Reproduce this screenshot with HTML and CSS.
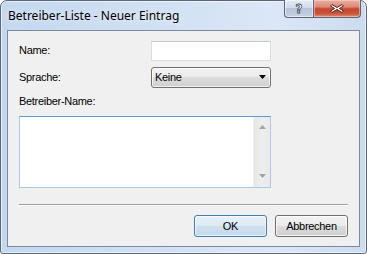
FILE: index.html
```html
<!DOCTYPE html>
<html lang="de">
<head>
<meta charset="utf-8">
<title>Betreiber-Liste - Neuer Eintrag</title>
<link rel="stylesheet" href="styles.css">
</head>
<body>
<div class="window">
  <div class="titlebar">
    <span class="title">Betreiber-Liste - Neuer Eintrag</span>
    <div class="caption-btns">
      <div class="cap-help"><span>?</span></div>
      <div class="cap-close">
        <svg width="16" height="11" viewBox="0 0 16 11">
          <path d="M3 1.5 L8 4.5 L13 1.5 L14.5 3 L10.5 5.5 L14.5 8 L13 9.5 L8 6.5 L3 9.5 L1.5 8 L5.5 5.5 L1.5 3 Z" fill="#fff" stroke="#5a1a10" stroke-width="1" stroke-linejoin="round"/>
        </svg>
      </div>
    </div>
  </div>
  <div class="client">
    <div class="row row-name">
      <label class="lbl">Name:</label>
      <input class="textbox" type="text">
    </div>
    <div class="row row-lang">
      <label class="lbl">Sprache:</label>
      <div class="combo">
        <span>Keine</span>
        <svg class="combo-arrow" width="7" height="4" viewBox="0 0 7 4"><path d="M0 0 H7 L3.5 4 Z" fill="#000"/></svg>
      </div>
    </div>
    <label class="lbl lbl-block">Betreiber-Name:</label>
    <div class="memo">
      <div class="memo-area"></div>
      <div class="vscroll">
        <svg width="7" height="4" viewBox="0 0 7 4"><path d="M0 4 H7 L3.5 0 Z" fill="#a3a3a3"/></svg>
        <svg width="7" height="4" viewBox="0 0 7 4"><path d="M0 0 H7 L3.5 4 Z" fill="#a3a3a3"/></svg>
      </div>
    </div>
    <div class="separator"></div>
    <div class="buttons">
      <button class="btn btn-default">OK</button>
      <button class="btn">Abbrechen</button>
    </div>
  </div>
</div>
</body>
</html>
```

FILE: styles.css
```css
html, body {
  margin: 0;
  padding: 0;
  background: #fff;
}

.window {
  box-sizing: border-box;
  width: 367px;
  height: 254px;
  border: 1px solid #5b6778;
  border-radius: 7px 7px 3px 3px;
  background: linear-gradient(90deg, #c3d8ee 0%, #cfe0f3 40%, #dbe7f6 75%, #cbdcef 100%);
  box-shadow: inset 0 0 0 1px rgba(255,255,255,0.6);
  padding: 0 6px 6px 6px;
  display: flex;
  flex-direction: column;
}

.titlebar {
  height: 29px;
  display: flex;
  align-items: flex-start;
  justify-content: space-between;
}

.title {
  font-family: "Noto Sans", "Open Sans", sans-serif;
  font-size: 12px;
  line-height: 16px;
  color: #000;
  margin: 7px 0 0 1px;
  text-shadow: 0 0 6px rgba(255,255,255,0.9);
}

.caption-btns {
  display: flex;
  margin-right: -1px;
  margin-top: -1px;
}

.cap-help, .cap-close {
  height: 18px;
  box-sizing: border-box;
  border: 1px solid #5a6678;
  border-top: none;
  display: flex;
  align-items: center;
  justify-content: center;
}

.cap-help {
  width: 29px;
  border-radius: 0 0 0 4px;
  border-right: none;
  background: linear-gradient(180deg, #e3ebf5 0%, #d2dcea 45%, #b5c4d7 50%, #c4d2e3 100%);
  box-shadow: inset 0 0 0 1px rgba(255,255,255,0.55);
}

.cap-help span {
  font-family: "DejaVu Sans", sans-serif;
  font-weight: bold;
  font-size: 12px;
  line-height: 12px;
  color: #fff;
  -webkit-text-stroke: 0.8px #3d4a5c;
}

.cap-close {
  width: 48px;
  border-radius: 0 0 4px 0;
  background: linear-gradient(180deg, #eab0a3 0%, #dc8a78 40%, #c8452d 52%, #c9553c 80%, #de8f78 100%);
  box-shadow: inset 0 0 0 1px rgba(255,220,210,0.5);
}

.client {
  box-sizing: border-box;
  height: 218px;
  border: 1px solid #7d8a9b;
  background: #f0f0f0;
  padding: 10px 11px 0 11px;
  display: flex;
  flex-direction: column;
  font-family: "Liberation Sans", Arial, sans-serif;
  font-size: 11px;
  letter-spacing: -0.3px;
  color: #000;
}

.row {
  display: flex;
  align-items: center;
  justify-content: space-between;
  width: 252px;
}

.row-lang {
  margin-top: 6px;
}

.lbl {
  line-height: 13px;
}

.lbl-block {
  display: block;
  margin-top: 7px;
}

.textbox {
  box-sizing: border-box;
  width: 120px;
  height: 20px;
  margin: 0;
  border: 1px solid #d8dde5;
  border-top-color: #c3c9d2;
  background: #fff;
  outline: none;
  padding: 0 3px;
  font: inherit;
}

.combo {
  box-sizing: border-box;
  width: 120px;
  height: 21px;
  border: 1px solid #707070;
  border-radius: 3px;
  background: linear-gradient(180deg, #f2f2f2 0%, #ebebeb 49%, #dddddd 50%, #cfcfcf 100%);
  box-shadow: inset 0 0 0 1px rgba(255,255,255,0.7);
  display: flex;
  align-items: center;
  justify-content: space-between;
  padding: 0 4px 0 3px;
  color: #000;
}

.combo span {
  line-height: 13px;
}

.combo-arrow {
  display: block;
}

.memo {
  box-sizing: border-box;
  width: 252px;
  height: 72px;
  margin-top: 8px;
  border: 1px solid #a9c9ea;
  border-top-color: #5b9bd5;
  background: #fff;
  display: flex;
}

.memo-area {
  flex: 1;
}

.vscroll {
  box-sizing: border-box;
  width: 17px;
  background: linear-gradient(90deg, #e6e6e6 0%, #eeeeee 50%, #e9e9e9 100%);
  border-left: 1px solid #f2f2f2;
  display: flex;
  flex-direction: column;
  align-items: center;
  justify-content: space-between;
  padding: 8px 0 9px 0;
}

.vscroll svg {
  display: block;
}

.separator {
  width: 329px;
  height: 0;
  margin-top: 16px;
  border-top: 1px solid #a0a0a0;
  border-bottom: 1px solid #ffffff;
}

.buttons {
  display: flex;
  justify-content: flex-end;
  gap: 8px;
  width: 329px;
  margin-top: 9px;
}

.btn {
  box-sizing: border-box;
  width: 73px;
  height: 22px;
  margin: 0;
  padding: 0;
  border: 1px solid #707070;
  border-radius: 3px;
  background: linear-gradient(180deg, #f2f2f2 0%, #ebebeb 49%, #dddddd 50%, #cfcfcf 100%);
  box-shadow: inset 0 0 0 1px rgba(255,255,255,0.75);
  font-family: "Liberation Sans", Arial, sans-serif;
  font-size: 11px;
  letter-spacing: -0.3px;
  color: #000;
}

.btn-default {
  border-color: #3c7fb1;
  background: linear-gradient(180deg, #e8f1f9 0%, #dde9f4 49%, #cfe0ef 50%, #c4d9ec 100%);
  box-shadow: inset 0 0 0 1px rgba(255,255,255,0.7);
}
```
